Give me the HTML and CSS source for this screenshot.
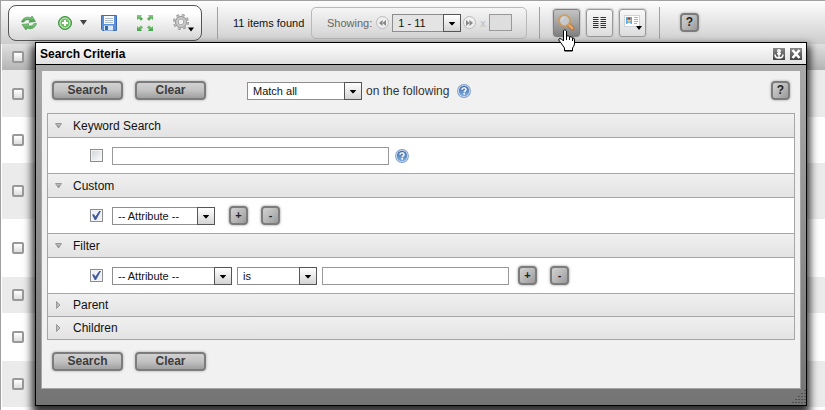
FILE: index.html
```html
<!DOCTYPE html>
<html lang="en">
<head>
<meta charset="utf-8">
<title>Search Criteria</title>
<link rel="stylesheet" href="styles.css">
</head>
<body>
<svg class="defs" aria-hidden="true">
  <defs>
    <linearGradient id="blue" x1="0" y1="0" x2="0" y2="1"><stop offset="0" stop-color="#3f6aa8"/><stop offset="1" stop-color="#7eaee0"/></linearGradient>
    <linearGradient id="green" x1="0" y1="0" x2="0" y2="1"><stop offset="0" stop-color="#8ccb85"/><stop offset="1" stop-color="#3f9e45"/></linearGradient>
    <linearGradient id="grey" x1="0" y1="0" x2="0" y2="1"><stop offset="0" stop-color="#c8c8c8"/><stop offset="1" stop-color="#858585"/></linearGradient>
    <symbol id="help" viewBox="0 0 14 14">
      <circle cx="7" cy="7" r="6.900" fill="#7f9cc8"/><circle cx="7" cy="7" r="6" fill="#d3e1f2"/><circle cx="7" cy="7" r="5.200" fill="url(#blue)"/>
      <path d="M5 5.700C5 3.300 9 3.300 9 5.500C9 6.800 7.200 6.800 7.200 8.200" fill="none" stroke="#fff" stroke-width="1.500"/><rect x="6.400" y="9" width="1.600" height="1.600" fill="#fff"/>
    </symbol>
    <symbol id="down" viewBox="0 0 7 4"><path d="M0 0H7L3.500 4Z"/></symbol>
  </defs>
</svg>
<main class="page">
  <header class="toolbar">
    <div class="tools">
      <button class="tool" aria-label="Refresh"><svg width="18" height="16" viewBox="0 0 18 16"><g fill="url(#green)" stroke="#3c9444" stroke-width=".6"><path d="M1.500 7C2.500 3 7 1 11 2.800L12 1L15.500 6.500L9 7.300L10 5.400C7.500 4 5 4.700 4 7Z"/><path d="M16.500 8.500C15.500 13 11 14.800 7 13L6 15L2 9.500L8.800 8.700L8 10.500C10.500 11.600 13 11 14 8.500Z"/></g></svg></button>
      <button class="tool" aria-label="Add"><svg width="14" height="14" viewBox="0 0 14 14"><circle cx="7" cy="7" r="6.500" fill="#57ad50" stroke="#3e9343"/><circle cx="7" cy="7" r="5" fill="#70bd68" stroke="#d8f0d4"/><path d="M7 4V10M4 7H10" stroke="#fff" stroke-width="2"/></svg><svg width="7" height="5" viewBox="0 0 7 5"><path d="M0 0H7L3.500 5Z" fill="#444"/></svg></button>
      <button class="tool tool-save" aria-label="Save"><svg width="16" height="16" viewBox="0 0 16 16"><path d="M.5.5H15.500V15.500H1.500L.5 14.500Z" fill="#5b8fd8" stroke="#3d6ebb"/><rect x="3" y="1" width="10" height="8" fill="#f6fafd"/><path d="M4 3.500H12M4 5.500H12M4 7.500H12" stroke="#aebccb"/><rect x="3" y="10.500" width="9" height="5" fill="#dbe8f5"/><rect x="4" y="11" width="3" height="4" fill="#3966a8"/></svg></button>
      <button class="tool" aria-label="Expand"><svg width="16" height="16" viewBox="0 0 16 16" fill="url(#green)"><path d="M0 0H5L3.800 1.500L6 3.800L4 5.800L1.700 3.500L0 5Z"/><path d="M16 0V5L14.300 3.500L12 5.800L10 3.800L12.200 1.500L11 0Z"/><path d="M0 16V11L1.700 12.500L4 10.200L6 12.200L3.800 14.500L5 16Z"/><path d="M16 16H11L12.200 14.500L10 12.200L12 10.200L14.300 12.500L16 11Z"/></svg></button>
      <button class="tool" aria-label="Settings"><svg width="21" height="18" viewBox="0 0 21 18"><circle cx="8" cy="8" r="6.500" fill="none" stroke="#8e8e8e" stroke-width="3" stroke-dasharray="2.600 2.500"/><circle cx="8" cy="8" r="4.200" fill="none" stroke="#8e8e8e" stroke-width="3.600"/><circle cx="8" cy="8" r="4" fill="none" stroke="#c6c6c6" stroke-width="2.400"/><circle cx="8" cy="8" r="6.500" fill="none" stroke="#bdbdbd" stroke-width="1.500" stroke-dasharray="2.600 2.500"/><path d="M15 13.500H21L18 17.500Z"/></svg></button>
    </div>
    <span class="divider"></span>
    <span class="count">11 items found</span>
    <div class="pager">
      <label for="range">Showing:</label>
      <button class="step" aria-label="Previous page"><svg width="7" height="6" viewBox="0 0 7 6"><path d="M3.500 0V6L0 3ZM7 0V6L3.500 3Z"/></svg></button>
      <span class="select select-range"><select id="range"><option>1 - 11</option></select><svg viewBox="0 0 17 16"><use href="#down" x="5" y="7" width="7" height="4"/></svg></span>
      <button class="step" aria-label="Next page"><svg width="7" height="6" viewBox="0 0 7 6"><path d="M0 0V6L3.500 3ZM3.500 0V6L7 3Z"/></svg></button>
      <label class="times" for="page">x</label>
      <input class="page-number" id="page" type="text">
    </div>
    <span class="divider"></span>
    <div class="views">
      <button class="view active" aria-label="Search"><svg width="17" height="17" viewBox="0 0 17 17"><path d="M10 10L14.500 14.500" stroke="#b9783a" stroke-width="4" stroke-linecap="round"/><path d="M10.500 10.500L14.300 14.300" stroke="#e8b070" stroke-width="2" stroke-linecap="round"/><circle cx="6.500" cy="6.500" r="5.500" fill="#c3c9ce" stroke="#d49b54" stroke-width="1.700"/><path d="M3.500 6.500A3 3 0 0 1 6.500 3.500" stroke="#e4e9ec" fill="none"/></svg>
        <svg class="pointer" width="17" height="23" viewBox="0 0 17 23"><path d="M5.500 1.500Q7-.5 8.500 2V7Q10.500 6 11.500 8Q13.500 7 14.500 9Q16.500 8.500 16.500 11V15Q16 17.500 14.500 19V22H6.500V19L3 14L.7 11Q.5 8.500 3.500 10L5.500 12Z" fill="#fff" stroke="#000"/><path d="M8.500 7V11M11.500 8V11M14.500 9V12M6 21.500H15" stroke="#000" stroke-width="1"/></svg></button>
      <button class="view" aria-label="Columns"><svg width="13" height="12" viewBox="0 0 13 12"><path d="M0 .5H5.500M0 2.500H5.500M0 4.500H5.500M0 6.500H5.500M0 8.500H5.500M0 10.500H5.500M7.500 .5H13M7.500 2.500H13M7.500 4.500H13M7.500 6.500H13M7.500 8.500H13M7.500 10.500H13" stroke="#333"/></svg></button>
      <button class="view" aria-label="Card view"><svg width="18" height="16" viewBox="0 0 18 16"><rect x=".5" y=".5" width="15" height="11" fill="#fff" stroke="#ccd2d8"/><rect x="2" y="2" width="6" height="7" fill="#58a9e4"/><circle cx="5" cy="5" r="2" fill="#f2c296"/><path d="M3 4.500Q5 1 7 4.500Z" fill="#6b3e24"/><path d="M3 9Q5 6 7 9Z" fill="#fff"/><path d="M10 2.500H14M10 4.500H14M10 6.500H14M10 8.500H13" stroke="#8fb7dc"/><path d="M12 11H18L15 15Z"/></svg></button>
    </div>
    <span class="divider"></span>
    <button class="small toolbar-help" aria-label="Help">?</button>
  </header>

  <table class="items">
    <thead><tr class="r26"><th><input type="checkbox" aria-label="Select all"></th><th></th></tr></thead>
    <tbody>
      <tr class="r47"><td><input type="checkbox" aria-label="Item 1"></td><td></td></tr>
      <tr class="r46"><td><input type="checkbox" aria-label="Item 2"></td><td></td></tr>
      <tr class="r56"><td><input type="checkbox" aria-label="Item 3"></td><td></td></tr>
      <tr class="r58"><td><input type="checkbox" aria-label="Item 4"></td><td></td></tr>
      <tr class="r36"><td><input type="checkbox" aria-label="Item 5"></td><td></td></tr>
      <tr class="r48"><td><input type="checkbox" aria-label="Item 6"></td><td></td></tr>
      <tr class="r46"><td><input type="checkbox" aria-label="Item 7"></td><td></td></tr>
    </tbody>
  </table>

  <section class="window">
    <header class="titlebar">
      <h1>Search Criteria</h1>
      <button class="win" aria-label="Dock"><svg width="10" height="10" viewBox="0 0 10 10" fill="none" stroke="#fff" stroke-width="1.500"><circle cx="5" cy="2" r="1.200"/><path d="M5 3V9M3 4.700H7M1 5.500C1 8 3 9 5 9S9 8 9 5.500"/></svg></button>
      <button class="win" aria-label="Close"><svg width="10" height="10" viewBox="0 0 10 10" stroke="#fff" stroke-width="2.600"><path d="M1.500 1L8.500 9M8.500 1L1.500 9"/></svg></button>
    </header>
    <div class="frame">
      <form class="content">
        <div class="bar">
          <button type="button" class="action">Search</button>
          <button type="button" class="action">Clear</button>
          <span class="select select-match"><select id="match"><option>Match all</option></select><svg viewBox="0 0 17 16"><use href="#down" x="5" y="7" width="7" height="4"/></svg></span>
          <label class="match-label" for="match">on the following</label>
          <svg class="help" width="14" height="14"><use href="#help"/></svg>
          <button type="button" class="small bar-help" aria-label="Help">?</button>
        </div>
        <div class="accordion">
          <section>
            <h2><svg width="7" height="6" viewBox="0 0 7 6"><path d="M.5 .5H6.500L3.500 5Z" fill="url(#grey)" stroke="#999"/></svg>Keyword Search</h2>
            <div class="criteria">
              <input type="checkbox" aria-label="Use keyword">
              <input type="text" class="keyword" aria-label="Keyword">
              <svg class="help" width="14" height="14"><use href="#help"/></svg>
            </div>
          </section>
          <section>
            <h2><svg width="7" height="6" viewBox="0 0 7 6"><path d="M.5 .5H6.500L3.500 5Z" fill="url(#grey)" stroke="#999"/></svg>Custom</h2>
            <div class="criteria">
              <input type="checkbox" aria-label="Use custom" checked>
              <span class="select select-custom"><select aria-label="Custom attribute"><option>-- Attribute --</option></select><svg viewBox="0 0 17 16"><use href="#down" x="5" y="7" width="7" height="4"/></svg></span>
              <span class="pair pair-wide"><button type="button" class="small" aria-label="Add">+</button><button type="button" class="small" aria-label="Remove">-</button></span>
            </div>
          </section>
          <section>
            <h2><svg width="7" height="6" viewBox="0 0 7 6"><path d="M.5 .5H6.500L3.500 5Z" fill="url(#grey)" stroke="#999"/></svg>Filter</h2>
            <div class="criteria">
              <input type="checkbox" aria-label="Use filter" checked>
              <div class="rule">
                <span class="select select-filter"><select aria-label="Filter attribute"><option>-- Attribute --</option></select><svg viewBox="0 0 17 16"><use href="#down" x="5" y="7" width="7" height="4"/></svg></span>
                <span class="select select-op"><select aria-label="Operator"><option>is</option></select><svg viewBox="0 0 17 16"><use href="#down" x="5" y="7" width="7" height="4"/></svg></span>
                <input type="text" class="value" aria-label="Value">
              </div>
              <span class="pair"><button type="button" class="small" aria-label="Add">+</button><button type="button" class="small" aria-label="Remove">-</button></span>
            </div>
          </section>
          <section class="closed"><h2><svg width="7" height="8" viewBox="0 0 7 8"><path d="M1.500 .5L5 4L1.500 7.500Z" fill="#bbb" stroke="#999"/></svg>Parent</h2></section>
          <section class="closed"><h2><svg width="7" height="8" viewBox="0 0 7 8"><path d="M1.500 .5L5 4L1.500 7.500Z" fill="#bbb" stroke="#999"/></svg>Children</h2></section>
        </div>
        <div class="bar bar-bottom">
          <button type="button" class="action">Search</button>
          <button type="button" class="action">Clear</button>
        </div>
      </form>
      <svg class="grip" width="14" height="13" viewBox="0 0 14 13"><path d="M12 .5H14M9 3.500H14M6 6.500H14M3 9.500H14M0 12.500H14" stroke="#505050" stroke-dasharray="2 1"/></svg>
    </div>
  </section>
</main>
</body>
</html>
```
FILE: styles.css
```css
* { box-sizing: border-box; }
body { margin: 0; font: 11px "Liberation Sans", Arial, sans-serif; color: #111; background: #fff; }
button, input, select { font: inherit; color: inherit; margin: 0; padding: 0; border-radius: 0; }
svg { display: block; flex: none; }
.defs { position: absolute; width: 0; height: 0; }
.page { position: relative; min-height: 100vh; border-top: 1px solid #a0a0a0; border-left: 1px solid #a0a0a0; overflow: hidden; }

.toolbar { display: flex; align-items: center; height: 43px; padding-left: 7px; background: linear-gradient(#fdfdfd, #cdcdcd); }
.tools { display: flex; align-items: center; gap: 20px; width: 194px; height: 36px; padding-left: 11px; border: 1px solid #555; border-radius: 8px; background: linear-gradient(#fff 20%, #d8d8d8); }
.tool { display: flex; align-items: center; gap: 8px; border: 0; background: none; }
.tool-save { margin-left: -6px; }
.divider { width: 1px; height: 32px; margin-left: 15px; background: #a0a0a0; }
.count { width: 78px; margin-left: 15px; white-space: nowrap; }
.pager { display: flex; align-items: center; width: 216px; height: 32px; padding-left: 15px; border: 1px solid #b9b9b9; border-radius: 5px; color: #666; }
.pager + .divider { margin-left: 12px; }
.step { display: flex; align-items: center; justify-content: center; width: 13px; height: 13px; margin: 0 3px 0 4px; border: 1px solid #bbb; border-radius: 50%; background: #efefef; fill: #888; }
.select + .step { margin: 0 4px 0 2px; }
.times { color: #bbb; }
.page-number { width: 23px; height: 17px; margin-left: 3px; }
.views { display: flex; gap: 6px; margin-left: 13px; }
.views + .divider { margin-left: 13px; }
.view { position: relative; display: flex; align-items: center; justify-content: center; width: 27px; height: 28px; border: 1px solid #999; border-radius: 3px; background: linear-gradient(#f8f8f8, #ddd); box-shadow: 0 0 1px 1px #ccc; }
.view.active { border-color: #808080; background: linear-gradient(#c4c4c4, #808080); }
.pointer { position: absolute; left: 4px; top: 19px; z-index: 5; }
.toolbar-help { margin-left: 20px; }

input[type="checkbox"] { display: block; appearance: none; width: 13px; height: 13px; border: 1px solid #8e8e8e; background: linear-gradient(135deg, #cfd3d8, #fff); box-shadow: inset 0 0 0 1px #f4f4f4; flex: none; }
input[type="checkbox"]:checked { background: #eef0f5; }
input[type="checkbox"]:checked::after { content: ""; display: block; width: 9px; height: 9px; margin: 1px; background: #435a9b; clip-path: polygon(0 40%, 22% 35%, 38% 62%, 80% 0, 100% 0, 45% 100%, 30% 100%); }
input[type="text"] { border: 1px solid #999; background: #fff; outline: 0; }
.pager input[type="text"] { background: #dedede; }

.items { width: calc(100% - 1px); margin-left: 1px; border-collapse: collapse; }
.items th, .items td { padding: 0 10px; }
.items th:first-child, .items td:first-child { width: 33px; }
.items thead { background: linear-gradient(#e0e0e0, #b4b4b4); }
.items tbody tr:nth-child(odd) { background: #ebebeb; }
.items input[type="checkbox"] { width: 12px; height: 12px; border: 2px solid #999; border-radius: 2px; background: linear-gradient(#fff, #ddd); box-shadow: none; }
.r26 { height: 26px; } .r36 { height: 36px; } .r46 { height: 46px; } .r47 { height: 47px; }
.r48 { height: 48px; } .r56 { height: 56px; } .r58 { height: 58px; }

/* Floating search window over the item list */
.window { position: absolute; top: 41px; left: 34px; right: 18px; border: 1px solid #000; box-shadow: 0 6px 8px 3px rgba(0, 0, 0, .8); }
.titlebar { display: flex; align-items: center; gap: 5px; height: 22px; padding: 0 4px; border-bottom: 1px solid #000; background: linear-gradient(#fff, #e0e0e0); }
h1 { flex: 1; margin: 0; font-size: 12px; font-weight: bold; color: #000; }
.win { display: flex; align-items: center; justify-content: center; width: 12px; height: 12px; border: 0; background: linear-gradient(#888, #444); }
.frame { position: relative; padding: 5px 5px 16px; background: linear-gradient(#a9a9a9, #747474); }
.grip { position: absolute; right: 0; bottom: 2px; }
.content { padding: 0 5px; border: 1px solid #a6a6a6; background: #f1f1f1; font-size: 12px; }
.bar { display: flex; align-items: center; padding: 10px 5px 13px; }
.bar-bottom { padding: 12px 5px 17px; }
.action { width: 71px; height: 19px; margin-right: 12px; border: 2px solid #7c7c7c; border-radius: 4px; background: linear-gradient(#d2d2d2, #c2c2c2 50%, #a0a0a0); box-shadow: 0 0 2px 1px #ccc; font-weight: bold; line-height: 15px; color: #3c3c3c; }
.small { width: 19px; height: 19px; border: 2px solid #7c7c7c; border-radius: 4px; background: linear-gradient(135deg, #d2d2d2, #b9b9b9 50%, #999); box-shadow: 0 0 2px 1px #ccc; font-size: 12px; font-weight: bold; line-height: 15px; color: #222; }
.pair .small { font-size: 11px; }
.bar-help { margin-left: auto; }
.match-label { margin: 0 8px 0 4px; color: #333; }

.select { position: relative; display: block; height: 18px; font-size: 11px; color: #111; }
.select select { display: block; width: 100%; height: 100%; padding: 0 18px 0 5px; border: 1px solid #8e8e8e; background: #fff; appearance: none; }
.select svg { position: absolute; top: 0; right: 0; width: 18px; height: 18px; border: 1px solid #555; background: linear-gradient(#fff, #d4d4d4); pointer-events: none; }
.select-range { width: 69px; }
.select-range select { background: #e4e4e4; }
.select-match { width: 115px; margin-left: 29px; }
.select-custom { width: 103px; }
.select-filter { width: 120px; }
.select-op { width: 80px; }

.accordion { border: 1px solid #a6a6a6; border-top: 0; background: #fff; }
.accordion section { border-top: 1px solid #a6a6a6; }
h2 { display: flex; align-items: center; gap: 11px; height: 23px; margin: 0; padding-left: 7px; background: linear-gradient(#f0f0f0, #e3e3e3); font-size: 12px; font-weight: normal; }
.closed h2 { height: 22px; }
.criteria { display: flex; align-items: center; gap: 9px; height: 36px; padding-left: 42px; border-top: 1px solid #a6a6a6; }
.keyword { width: 277px; height: 18px; }
.criteria .help { margin-left: -3px; }
.rule { display: flex; align-items: center; gap: 5px; }
.value { width: 187px; height: 18px; }
.pair { display: flex; gap: 13px; }
.pair-wide { margin-left: 5px; }
```
